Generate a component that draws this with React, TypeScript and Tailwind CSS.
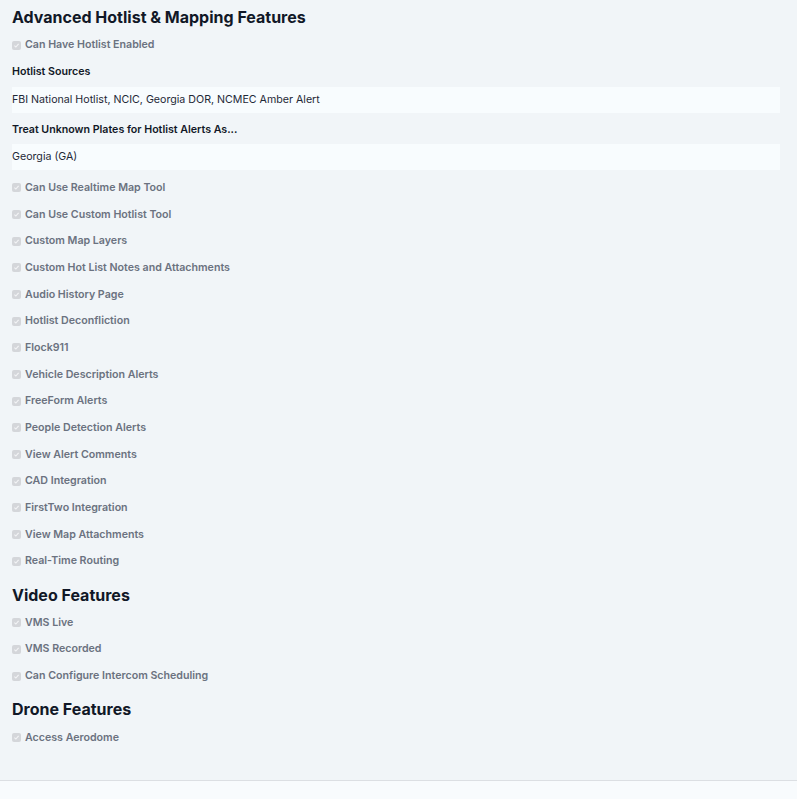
const hotlistFeatures = [
  "Can Use Realtime Map Tool",
  "Can Use Custom Hotlist Tool",
  "Custom Map Layers",
  "Custom Hot List Notes and Attachments",
  "Audio History Page",
  "Hotlist Deconfliction",
  "Flock911",
  "Vehicle Description Alerts",
  "FreeForm Alerts",
  "People Detection Alerts",
  "View Alert Comments",
  "CAD Integration",
  "FirstTwo Integration",
  "View Map Attachments",
  "Real-Time Routing",
];

const videoFeatures = ["VMS Live", "VMS Recorded", "Can Configure Intercom Scheduling"];

function CheckRow({ label }: { label: string }) {
  return (
    <div className="flex h-[26.67px] items-center gap-[4px]">
      <span className="flex h-[9px] w-[9px] items-center justify-center rounded-[2px] bg-[#d4d6da]">
        <svg viewBox="0 0 10 10" className="h-[7px] w-[7px]">
          <path d="M2 5.2 4.1 7.2 8 2.8" fill="none" stroke="#f3f4f6" strokeWidth="1.6" />
        </svg>
      </span>
      <span className="text-[10.65px] font-semibold text-[#6b7280]">{label}</span>
    </div>
  );
}

function SectionTitle({ children, className = "" }: { children: React.ReactNode; className?: string }) {
  return (
    <h2 className={`h-[26px] text-[16px] font-bold leading-[26px] text-[#111827] ${className}`}>
      {children}
    </h2>
  );
}

function ValueBox({ value, className = "" }: { value: string; className?: string }) {
  return (
    <div className={`flex h-[26px] items-center bg-[#f8fcfe] text-[10.65px] text-[#1f2937] ${className}`}>
      {value}
    </div>
  );
}

export default function App() {
  return (
    <div className="min-h-[799px] w-full bg-[#f8fbfd] font-['Inter','Liberation_Sans',sans-serif]">
      <div className="border-b border-[#dcdfe3] bg-[#f1f5f8] pb-[29px] pl-3 pr-[17px] pt-[4px]">
        {/* Hotlist & mapping */}
        <SectionTitle>Advanced Hotlist &amp; Mapping Features</SectionTitle>
        <div className="mt-[2px]">
          <CheckRow label="Can Have Hotlist Enabled" />
        </div>
        <div className="flex h-[26px] items-center text-[10.65px] font-semibold text-[#111827]">
          Hotlist Sources
        </div>
        <ValueBox className="mt-[2px]" value="FBI National Hotlist, NCIC, Georgia DOR, NCMEC Amber Alert" />
        <div className="mt-[4px] flex h-[26px] items-center text-[10.65px] font-semibold text-[#111827]">
          Treat Unknown Plates for Hotlist Alerts As...
        </div>
        <ValueBox className="mt-[1px]" value="Georgia (GA)" />
        <div className="mt-[5px]">
          {hotlistFeatures.map((f) => (
            <CheckRow key={f} label={f} />
          ))}
        </div>

        {/* Video */}
        <SectionTitle className="mt-[7px]">Video Features</SectionTitle>
        <div className="mt-[2px]">
          {videoFeatures.map((f) => (
            <CheckRow key={f} label={f} />
          ))}
        </div>

        {/* Drone */}
        <SectionTitle className="mt-[7px]">Drone Features</SectionTitle>
        <div className="mt-[2px]">
          <CheckRow label="Access Aerodome" />
        </div>
      </div>
    </div>
  );
}
